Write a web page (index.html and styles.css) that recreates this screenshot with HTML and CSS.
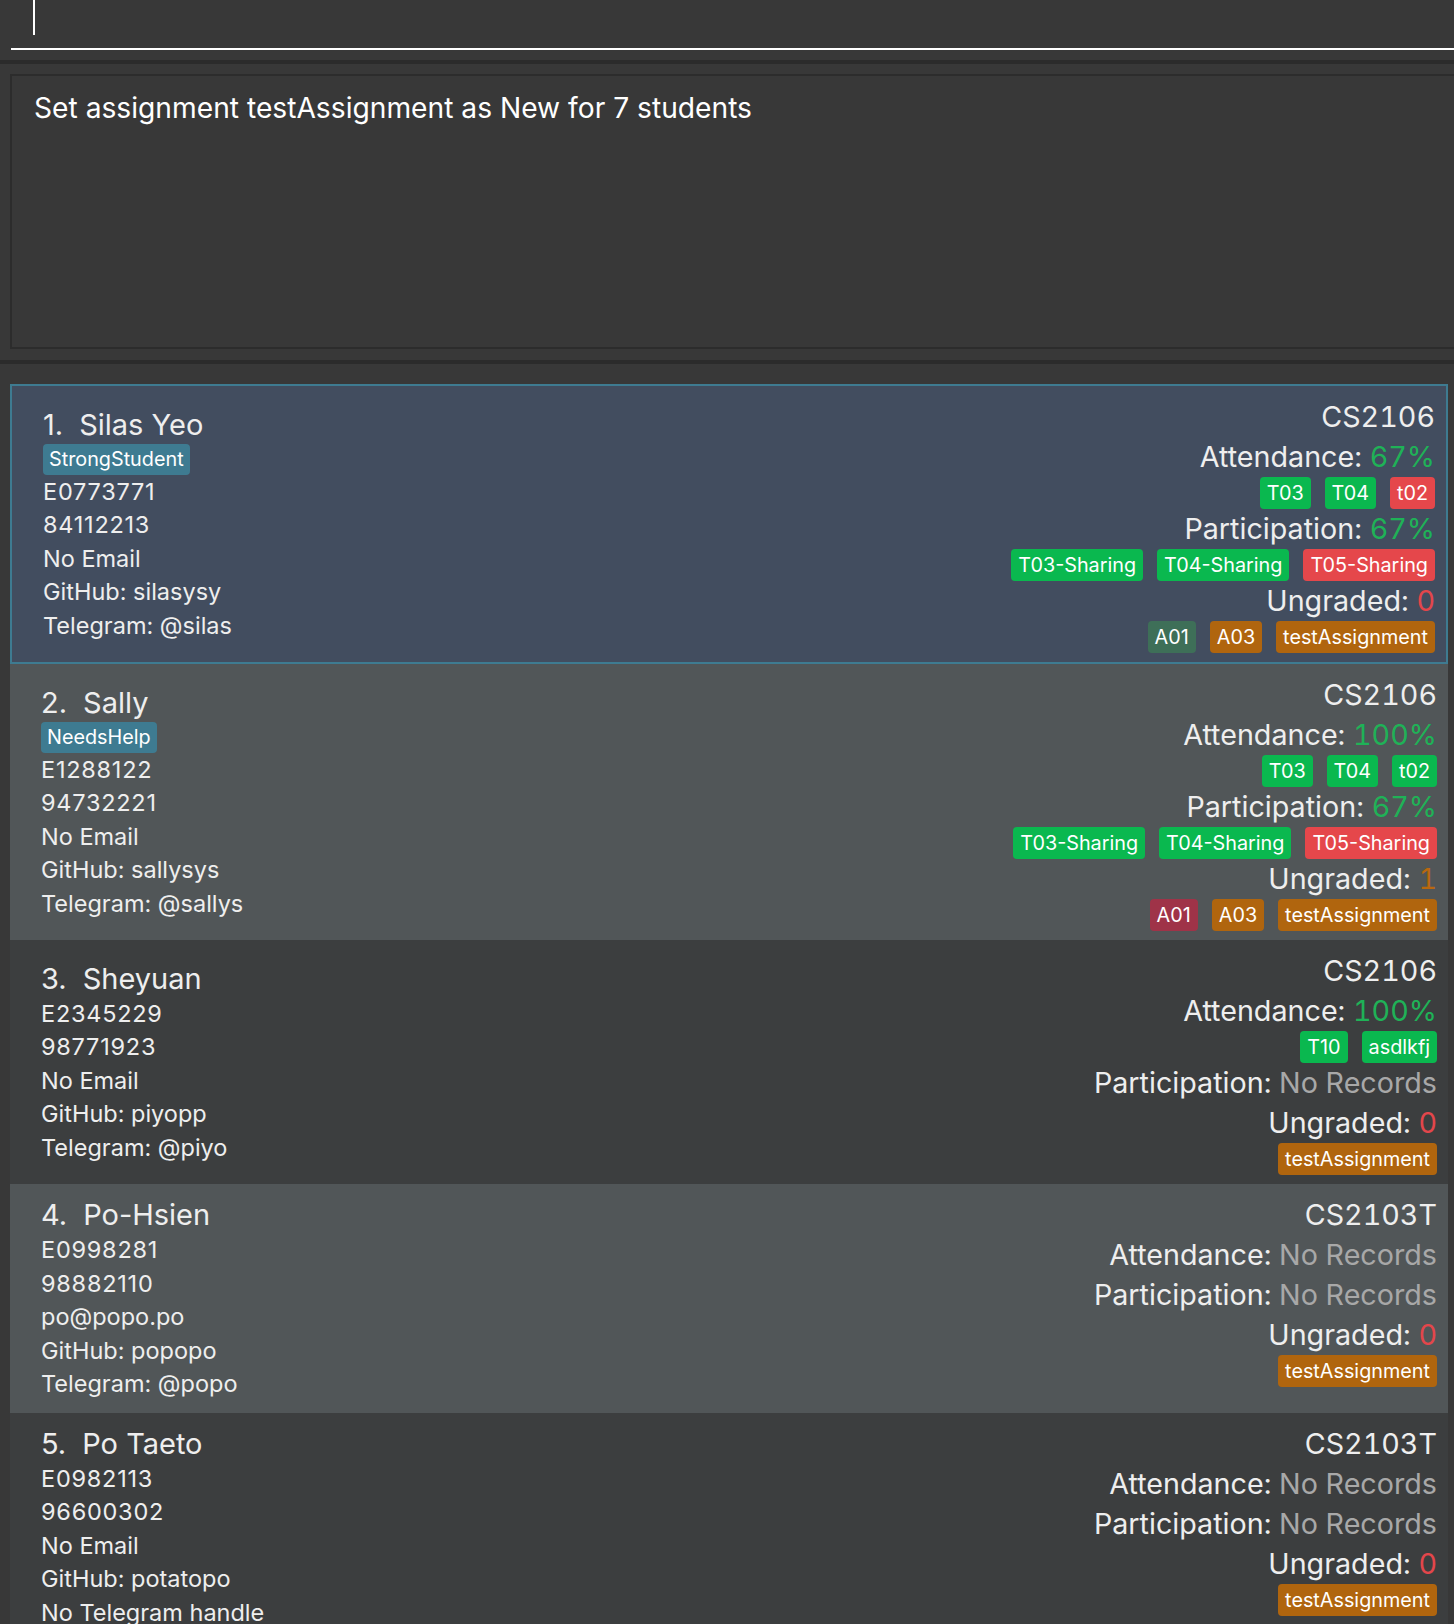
FILE: index.html
```html
<!DOCTYPE html>
<html>
<head>
<meta charset="utf-8">
<link rel="stylesheet" href="styles.css">
</head>
<body>
<div class="app">
  <div class="command-box"><div class="command-field"><span class="caret"></span></div></div>
  <div class="divider"></div>
  <div class="result-pane">
    <div class="result-box">Set assignment testAssignment as New for 7 students</div>
  </div>
  <div class="divider lower"></div>
  <div class="list-pane">
    <div class="card selected">
      <div class="card-left">
        <div class="name-row"><span class="idx">1.</span><span class="name">Silas Yeo</span></div>
        <div class="tags"><span class="tag">StrongStudent</span></div>
        <div class="detail num">E0773771</div>
        <div class="detail num">84112213</div>
        <div class="detail">No Email</div>
        <div class="detail">GitHub: silasysy</div>
        <div class="detail">Telegram: @silas</div>
      </div>
      <div class="card-right">
        <div class="line">CS2106</div>
        <div class="line">Attendance: <span class="good">67%</span></div>
        <div class="chips"><span class="chip green">T03</span><span class="chip green">T04</span><span class="chip red">t02</span></div>
        <div class="line">Participation: <span class="good">67%</span></div>
        <div class="chips"><span class="chip green">T03-Sharing</span><span class="chip green">T04-Sharing</span><span class="chip red">T05-Sharing</span></div>
        <div class="line">Ungraded: <span class="bad">0</span></div>
        <div class="chips"><span class="chip moss">A01</span><span class="chip orange">A03</span><span class="chip orange">testAssignment</span></div>
      </div>
    </div>
    <div class="card even">
      <div class="card-left">
        <div class="name-row"><span class="idx">2.</span><span class="name">Sally</span></div>
        <div class="tags"><span class="tag">NeedsHelp</span></div>
        <div class="detail num">E1288122</div>
        <div class="detail num">94732221</div>
        <div class="detail">No Email</div>
        <div class="detail">GitHub: sallysys</div>
        <div class="detail">Telegram: @sallys</div>
      </div>
      <div class="card-right">
        <div class="line">CS2106</div>
        <div class="line">Attendance: <span class="good">100%</span></div>
        <div class="chips"><span class="chip green">T03</span><span class="chip green">T04</span><span class="chip green">t02</span></div>
        <div class="line">Participation: <span class="good">67%</span></div>
        <div class="chips"><span class="chip green">T03-Sharing</span><span class="chip green">T04-Sharing</span><span class="chip red">T05-Sharing</span></div>
        <div class="line">Ungraded: <span class="warn">1</span></div>
        <div class="chips"><span class="chip crimson">A01</span><span class="chip orange">A03</span><span class="chip orange">testAssignment</span></div>
      </div>
    </div>
    <div class="card odd">
      <div class="card-left">
        <div class="name-row"><span class="idx">3.</span><span class="name">Sheyuan</span></div>
        <div class="detail num">E2345229</div>
        <div class="detail num">98771923</div>
        <div class="detail">No Email</div>
        <div class="detail">GitHub: piyopp</div>
        <div class="detail">Telegram: @piyo</div>
      </div>
      <div class="card-right">
        <div class="line">CS2106</div>
        <div class="line">Attendance: <span class="good">100%</span></div>
        <div class="chips"><span class="chip green">T10</span><span class="chip green">asdlkfj</span></div>
        <div class="line">Participation: <span class="none">No Records</span></div>
        <div class="line">Ungraded: <span class="bad">0</span></div>
        <div class="chips"><span class="chip orange">testAssignment</span></div>
      </div>
    </div>
    <div class="card even">
      <div class="card-left">
        <div class="name-row"><span class="idx">4.</span><span class="name">Po-Hsien</span></div>
        <div class="detail num">E0998281</div>
        <div class="detail num">98882110</div>
        <div class="detail">po@popo.po</div>
        <div class="detail">GitHub: popopo</div>
        <div class="detail">Telegram: @popo</div>
      </div>
      <div class="card-right">
        <div class="line">CS2103T</div>
        <div class="line">Attendance: <span class="none">No Records</span></div>
        <div class="line">Participation: <span class="none">No Records</span></div>
        <div class="line">Ungraded: <span class="bad">0</span></div>
        <div class="chips"><span class="chip orange">testAssignment</span></div>
      </div>
    </div>
    <div class="card odd">
      <div class="card-left">
        <div class="name-row"><span class="idx">5.</span><span class="name">Po Taeto</span></div>
        <div class="detail num">E0982113</div>
        <div class="detail num">96600302</div>
        <div class="detail">No Email</div>
        <div class="detail">GitHub: potatopo</div>
        <div class="detail">No Telegram handle</div>
      </div>
      <div class="card-right">
        <div class="line">CS2103T</div>
        <div class="line">Attendance: <span class="none">No Records</span></div>
        <div class="line">Participation: <span class="none">No Records</span></div>
        <div class="line">Ungraded: <span class="bad">0</span></div>
        <div class="chips"><span class="chip orange">testAssignment</span></div>
      </div>
    </div>
  </div>
</div>
</body>
</html>
```

FILE: styles.css
```css
*, *::before, *::after {
  box-sizing: border-box;
}

html, body {
  margin: 0;
  padding: 0;
  height: 1624px;
  overflow: hidden;
  background: #383838;
}

body {
  font-family: "Inter", "Liberation Sans", sans-serif;
  color: #eeeeee;
}

.app {
  display: flex;
  flex-direction: column;
}

.command-box {
  height: 50px;
  padding-left: 11px;
}

.command-field {
  height: 50px;
  border-bottom: 2px solid #ffffff;
  position: relative;
}

.caret {
  position: absolute;
  left: 22px;
  top: 0;
  width: 2px;
  height: 35px;
  background: #ffffff;
}

.divider {
  height: 4px;
  background: #2b2b2b;
  margin: 10px 0;
}

.divider.lower {
  margin: 11px 0 20px;
}

.result-pane {
  padding-left: 10px;
  margin-right: -20px;
}

.result-box {
  height: 275px;
  border: 2px solid #2c2c2c;
  padding: 12px 22px 0;
  font-size: 28.2px;
  line-height: 40px;
  color: #ffffff;
}

.list-pane {
  padding: 0 6px 0 10px;
  display: flex;
  flex-direction: column;
}

.card {
  display: flex;
  justify-content: space-between;
  padding: 0 11px 0 31px;
}

.card.selected {
  background: #424d5f;
  border: 2px solid #3e7b91;
}

.card.even {
  background: #515658;
}

.card.odd {
  background: #3c3e3f;
}

.card-left {
  align-self: center;
  padding: 12px 0;
}

.name-row {
  font-size: 29px;
  line-height: 37px;
  height: 37px;
  white-space: nowrap;
}

.idx {
  margin-right: 16px;
}

.tags {
  display: flex;
  margin-top: 1px;
}

.tag {
  height: 31px;
  line-height: 31px;
  padding: 0 6px;
  font-size: 19.8px;
  background: #3e7b91;
  border-radius: 4px;
  color: #ffffff;
}

.detail {
  font-size: 23.5px;
  line-height: 33.5px;
  height: 33.5px;
  white-space: nowrap;
}

.detail.num {
  letter-spacing: 0.75px;
}

.card-right {
  align-self: flex-start;
  padding: 11px 0 9px;
  display: flex;
  flex-direction: column;
  align-items: flex-end;
}

.line {
  font-size: 28.7px;
  line-height: 40px;
  height: 40px;
  white-space: nowrap;
  font-feature-settings: "tnum" 1;
}

.good { color: #1fb257; }
.bad { color: #e3464b; }
.warn { color: #b8680f; }
.none { color: #a8a8a8; }

.chips {
  display: flex;
  gap: 14px;
  height: 32px;
}

.chip {
  height: 32px;
  line-height: 32px;
  padding: 0 7px;
  font-size: 19.8px;
  border-radius: 4px;
  color: #ffffff;
}

.chip.green { background: #0ab84f; }
.chip.red { background: #e5474b; }
.chip.orange { background: #b0650e; }
.chip.moss { background: #3e6f58; }
.chip.crimson { background: #9f3348; }
```
